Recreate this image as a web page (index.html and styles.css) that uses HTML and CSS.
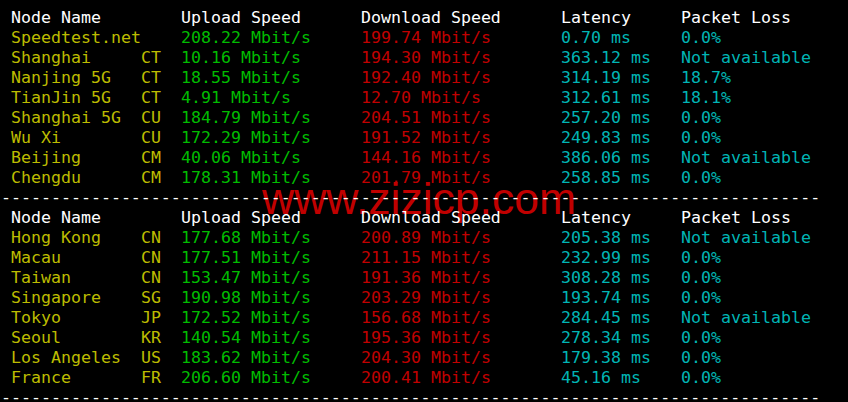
FILE: index.html
```html
<!DOCTYPE html>
<html>
<head>
<meta charset="utf-8">
<link rel="stylesheet" href="styles.css">
</head>
<body>
<div class="term">
  <div class="row head"><span class="c-name">Node Name</span><span class="c-up">Upload Speed</span><span class="c-down">Download Speed</span><span class="c-lat">Latency</span><span class="c-loss">Packet Loss</span></div>
  <div class="row"><span class="c-name y">Speedtest.net</span><span class="c-up g">208.22 Mbit/s</span><span class="c-down r">199.74 Mbit/s</span><span class="c-lat c">0.70 ms</span><span class="c-loss c">0.0%</span></div>
  <div class="row"><span class="c-node y">Shanghai</span><span class="c-isp y">CT</span><span class="c-up g">10.16 Mbit/s</span><span class="c-down r">194.30 Mbit/s</span><span class="c-lat c">363.12 ms</span><span class="c-loss c">Not available</span></div>
  <div class="row"><span class="c-node y">Nanjing 5G</span><span class="c-isp y">CT</span><span class="c-up g">18.55 Mbit/s</span><span class="c-down r">192.40 Mbit/s</span><span class="c-lat c">314.19 ms</span><span class="c-loss c">18.7%</span></div>
  <div class="row"><span class="c-node y">TianJin 5G</span><span class="c-isp y">CT</span><span class="c-up g">4.91 Mbit/s</span><span class="c-down r">12.70 Mbit/s</span><span class="c-lat c">312.61 ms</span><span class="c-loss c">18.1%</span></div>
  <div class="row"><span class="c-node y">Shanghai 5G</span><span class="c-isp y">CU</span><span class="c-up g">184.79 Mbit/s</span><span class="c-down r">204.51 Mbit/s</span><span class="c-lat c">257.20 ms</span><span class="c-loss c">0.0%</span></div>
  <div class="row"><span class="c-node y">Wu Xi</span><span class="c-isp y">CU</span><span class="c-up g">172.29 Mbit/s</span><span class="c-down r">191.52 Mbit/s</span><span class="c-lat c">249.83 ms</span><span class="c-loss c">0.0%</span></div>
  <div class="row"><span class="c-node y">Beijing</span><span class="c-isp y">CM</span><span class="c-up g">40.06 Mbit/s</span><span class="c-down r">144.16 Mbit/s</span><span class="c-lat c">386.06 ms</span><span class="c-loss c">Not available</span></div>
  <div class="row"><span class="c-node y">Chengdu</span><span class="c-isp y">CM</span><span class="c-up g">178.31 Mbit/s</span><span class="c-down r">201.79 Mbit/s</span><span class="c-lat c">258.85 ms</span><span class="c-loss c">0.0%</span></div>
  <div class="rule">----------------------------------------------------------------------------------</div>
  <div class="row head"><span class="c-name">Node Name</span><span class="c-up">Upload Speed</span><span class="c-down">Download Speed</span><span class="c-lat">Latency</span><span class="c-loss">Packet Loss</span></div>
  <div class="row"><span class="c-node y">Hong Kong</span><span class="c-isp y">CN</span><span class="c-up g">177.68 Mbit/s</span><span class="c-down r">200.89 Mbit/s</span><span class="c-lat c">205.38 ms</span><span class="c-loss c">Not available</span></div>
  <div class="row"><span class="c-node y">Macau</span><span class="c-isp y">CN</span><span class="c-up g">177.51 Mbit/s</span><span class="c-down r">211.15 Mbit/s</span><span class="c-lat c">232.99 ms</span><span class="c-loss c">0.0%</span></div>
  <div class="row"><span class="c-node y">Taiwan</span><span class="c-isp y">CN</span><span class="c-up g">153.47 Mbit/s</span><span class="c-down r">191.36 Mbit/s</span><span class="c-lat c">308.28 ms</span><span class="c-loss c">0.0%</span></div>
  <div class="row"><span class="c-node y">Singapore</span><span class="c-isp y">SG</span><span class="c-up g">190.98 Mbit/s</span><span class="c-down r">203.29 Mbit/s</span><span class="c-lat c">193.74 ms</span><span class="c-loss c">0.0%</span></div>
  <div class="row"><span class="c-node y">Tokyo</span><span class="c-isp y">JP</span><span class="c-up g">172.52 Mbit/s</span><span class="c-down r">156.68 Mbit/s</span><span class="c-lat c">284.45 ms</span><span class="c-loss c">Not available</span></div>
  <div class="row"><span class="c-node y">Seoul</span><span class="c-isp y">KR</span><span class="c-up g">140.54 Mbit/s</span><span class="c-down r">195.36 Mbit/s</span><span class="c-lat c">278.34 ms</span><span class="c-loss c">0.0%</span></div>
  <div class="row"><span class="c-node y">Los Angeles</span><span class="c-isp y">US</span><span class="c-up g">183.62 Mbit/s</span><span class="c-down r">204.30 Mbit/s</span><span class="c-lat c">179.38 ms</span><span class="c-loss c">0.0%</span></div>
  <div class="row"><span class="c-node y">France</span><span class="c-isp y">FR</span><span class="c-up g">206.60 Mbit/s</span><span class="c-down r">200.41 Mbit/s</span><span class="c-lat c">45.16 ms</span><span class="c-loss c">0.0%</span></div>
  <div class="rule">----------------------------------------------------------------------------------</div>
  <div class="watermark">www.zizicp.com</div>
</div>
</body>
</html>
```
FILE: styles.css
```css
html, body {
  margin: 0;
  padding: 0;
  background: #000;
}
body {
  width: 848px;
  height: 402px;
  overflow: hidden;
}
.term {
  position: relative;
  padding: 8px 0 0 1px;
  font-family: "DejaVu Sans Mono", monospace;
  font-size: 16.6px;
  line-height: 20px;
  color: #fff;
}
.row {
  display: flex;
  padding-left: 10px;
  height: 20px;
  position: relative;
  z-index: 1;
  white-space: pre;
}
.row span { display: block; }
.c-name { width: 170px; }
.c-node { width: 130px; }
.c-isp { width: 40px; }
.c-up { width: 180px; }
.c-down { width: 200px; }
.c-lat { width: 120px; }
.c-loss { flex: 1; }
.head { color: #ffffff; }
.y { color: #bcbc00; }
.g { color: #00bc00; }
.r { color: #c00000; }
.c { color: #00b4b4; }
.rule {
  height: 20px;
  color: #fff;
  white-space: pre;
  position: relative;
  z-index: 1;
}
.watermark {
  position: absolute;
  left: 262px;
  top: 177px;
  font-family: "Liberation Sans", Arial, sans-serif;
  font-size: 44.5px;
  line-height: 44px;
  color: #c00000;
  z-index: 0;
  white-space: pre;
}
```
